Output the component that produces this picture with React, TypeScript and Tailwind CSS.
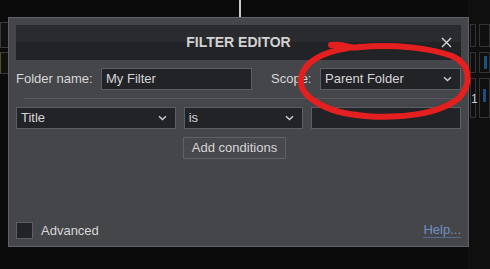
import React from 'react'

function Chevron() {
  return (
    <svg width="9" height="6" viewBox="0 0 9 6" className="shrink-0">
      <path d="M1 1.2l3.5 3.4L8 1.2" fill="none" stroke="#cfcfcf" strokeWidth={1.4} />
    </svg>
  )
}

function Select({ value, className }: { value: string; className: string }) {
  return (
    <div
      className={`flex h-[22px] items-center justify-between border border-[#5d5e63] bg-[#222326] pl-[4px] pr-[8px] text-[13px] text-[#d6d6d6] ${className}`}
    >
      <span>{value}</span>
      <Chevron />
    </div>
  )
}

export default function App() {
  return (
    <div
      className="relative h-[269px] w-[490px] overflow-hidden bg-[#0b0b0b]"
      style={{ fontFamily: '"Liberation Sans", Arial, sans-serif' }}
    >
      {/* taustalla oleva sovellus */}
      <div className="flex h-full">
        <div className="flex w-[10px] flex-col gap-[4px] pt-[22px]">
          <div className="h-[26px] border border-[#3a3a3a] bg-[#111]" />
          <div className="h-[22px] border border-[#3a3a3a] border-l-[#5b5020] bg-[#111]" />
        </div>
        <div className="flex flex-1 justify-center pl-[1px]">
          <div className="h-[17px] w-[2px] bg-[#c9c9c9]" />
        </div>
        <div className="flex w-[22px] flex-col gap-[5px] bg-[#0f0f10] pt-[24px] pl-[2px]">
          <div className="flex h-[23px] gap-[3px]">
            <div className="w-[6px] border border-[#333]" />
            <div className="flex-1 border border-[#333]" />
          </div>
          <div className="flex h-[21px] gap-[3px]">
            <div className="w-[6px] border border-[#333]" />
            <div className="flex flex-1 items-center border border-[#333] pl-[4px]">
              <div className="h-[13px] w-[3px] bg-[#1a4f80]" />
            </div>
          </div>
          <div className="flex h-[40px] gap-[3px]">
            <div className="flex w-[6px] items-start border border-[#333] pt-[14px] text-[12px] leading-none text-[#c9c9c9]">
              1
            </div>
            <div className="flex-1 border border-[#333] pt-[10px] pl-[3px]">
              <div className="h-[13px] w-[3px] bg-[#1a4f80]" />
            </div>
          </div>
        </div>
      </div>

      {/* Suodatineditori */}
      <div className="absolute left-[8px] top-[17px] flex h-[230px] w-[461px] flex-col border border-[#606166] bg-[#45464a] px-[7px] pt-[7px] pb-[6px] text-[13px] text-[#d6d6d6]">
        <div className="relative flex h-[35px] shrink-0 flex-col">
          <div className="h-[17px] bg-[#2a2b2e]" />
          <div className="flex-1 bg-[#222326]" />
          <div className="absolute inset-0 flex items-center justify-center text-[14px] font-bold text-[#d2d2d2]">
            FILTER EDITOR
          </div>
          <div className="absolute right-[9px] top-0 flex h-full items-center">
            <svg width="11" height="11" viewBox="0 0 11 11">
              <path d="M1 1l9 9M10 1L1 10" stroke="#d6d6d6" strokeWidth={1.4} />
            </svg>
          </div>
        </div>

        <div className="mt-[8px] flex h-[22px] items-center">
          <span className="w-[85px]">Folder name:</span>
          <div className="flex h-[22px] w-[151px] items-center border border-[#5d5e63] bg-[#222326] pl-[4px]">
            My Filter
          </div>
          <span className="ml-[19px] w-[49px]">Scope:</span>
          <Select value="Parent Folder" className="w-[141px]" />
        </div>

        <div className="mx-[8px] mt-[8px] h-px bg-[#58595e]" />

        <div className="mt-[8px] flex h-[22px] items-center gap-[8px]">
          <Select value="Title" className="w-[160px]" />
          <Select value="is" className="w-[120px]" />
          <div className="h-[22px] w-[150px] border border-[#5d5e63] bg-[#222326]" />
        </div>

        <div className="mt-[8px] flex pl-[167px]">
          <button className="flex h-[22px] w-[103px] items-center justify-center border border-[#5f6065] bg-[#47484c] text-[13px] text-[#d6d6d6]">
            Add conditions
          </button>
        </div>

        <div className="flex-1" />

        <div className="flex items-center justify-between">
          <div className="flex items-center gap-[8px]">
            <div className="h-[17px] w-[17px] border border-[#5d5e63] bg-[#222326]" />
            <span>Advanced</span>
          </div>
          <span className="border-b border-[#58698a] leading-[15px] text-[#6f90c2]">Help...</span>
        </div>
      </div>

      {/* punainen merkintä */}
      <svg className="pointer-events-none absolute inset-0" width="490" height="269" viewBox="0 0 490 269">
        <path
          d="M331 45 C350 43, 345 50, 360 47 C395 44, 430 48, 452 56 C471 64, 472 84, 459 98 C440 114, 400 119, 365 116 C325 113, 298 96, 301 78 C304 62, 322 52, 348 48"
          fill="none"
          stroke="#e41f1f"
          strokeWidth={6}
          strokeLinecap="round"
        />
      </svg>
    </div>
  )
}
